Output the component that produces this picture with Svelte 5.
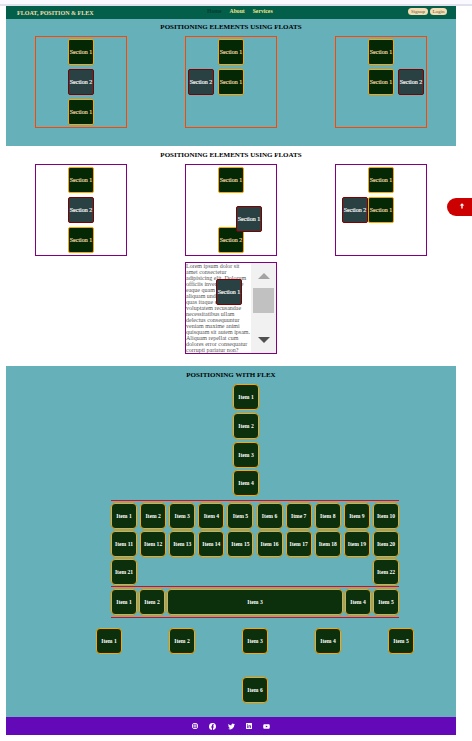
<script>
  const floatBoxes = [
    [{ t: 'Section 1', c: 2, r: 1 }, { t: 'Section 2', c: 2, r: 2, alt: true }, { t: 'Section 1', c: 2, r: 3 }],
    [{ t: 'Section 1', c: 2, r: 1 }, { t: 'Section 2', c: 1, r: 2, alt: true }, { t: 'Section 1', c: 2, r: 2 }],
    [{ t: 'Section 1', c: 2, r: 1 }, { t: 'Section 1', c: 2, r: 2 }, { t: 'Section 2', c: 3, r: 2, alt: true }]
  ];
  const positionBoxes = [
    floatBoxes[0],
    [{ t: 'Section 1', c: 2, r: 1 }, { t: 'Section 2', c: 2, r: 3 }, { t: 'Section 1', c: 2, r: 2, alt: true, kind: 'relative' }],
    [{ t: 'Section 1', c: 2, r: 1 }, { t: 'Section 1', c: 2, r: 2 }, { t: 'Section 2', c: 1, r: 2, alt: true, kind: 'beside' }]
  ];
  const lines = ['Lorem ipsum dolor sit', 'amet consectetur', 'adipisicing elit. Dolorum', 'officiis inventore labore', 'eaque quam quod', 'aliquam unde sunt', 'quas itaque sed', 'voluptatem recusandae', 'necessitatibus ullam', 'delectus consequuntur', 'veniam maxime animi', 'quisquam sit autem ipsam.', 'Aliquam repellat cum', 'dolores error consequatur', 'corrupti pariatur non?'];
  const seq = (a, b) => Array.from({ length: b - a + 1 }, (_, i) => 'Item ' + (a + i));
  const rows = [seq(1, 10).map((s) => (s === 'Item 7' ? 'Itme 7' : s)), seq(11, 20), seq(21, 22)];
</script>

{#snippet boxes(list)}
  <div class="boxes">
    {#each list as box}
      <div class="box">
        {#each box as s}
          <div class="sec {s.kind ?? ''}" class:alt={s.alt} style="grid-column:{s.c};grid-row:{s.r}">{s.t}</div>
        {/each}
      </div>
    {/each}
  </div>
{/snippet}

<div class="page">
  <div class="topline"></div>
  <nav>
    <b class="brand">FLOAT, POSITION &amp; FLEX</b>
    <div class="links"><span class="home">Home</span><span>About</span><span>Services</span></div>
    <div class="auth"><button class="signup">Signup</button><button>Login</button></div>
  </nav>
  <section class="floats">
    <h2>POSITIONING ELEMENTS USING FLOATS</h2>
    {@render boxes(floatBoxes)}
  </section>
  <section class="positions">
    <h2>POSITIONING ELEMENTS USING FLOATS</h2>
    {@render boxes(positionBoxes)}
    <div class="scrollbox">
      <div class="lorem">{#each lines as l}<div>{l}</div>{/each}</div>
      <div class="bar"><i class="up"></i><i class="thumb"></i><i class="down"></i></div>
      <div class="sec alt fixed">Section 1</div>
    </div>
  </section>
  <section class="flex">
    <h2>POSITIONING WITH FLEX</h2>
    <div class="column">{#each seq(1, 4) as t}<div class="item">{t}</div>{/each}</div>
    <div class="wrap">
      {#each rows as row}<div class="row">{#each row as t}<div class="item">{t}</div>{/each}</div>{/each}
    </div>
    <div class="grow">{#each seq(1, 5) as t, i}<div class="item" class:wide={i === 2}>{t}</div>{/each}</div>
    <div class="around">{#each seq(1, 5) as t}<div class="item">{t}</div>{/each}</div>
    <div class="last"><div class="item">Item 6</div></div>
  </section>
  <footer>
    <svg width="6" height="6" viewBox="0 0 24 24"><rect x="2" y="2" width="20" height="20" rx="6" fill="none" stroke="#fff" stroke-width="3.500" /><circle cx="12" cy="12" r="4.600" fill="none" stroke="#fff" stroke-width="3.500" /><circle cx="18" cy="6" r="1.500" fill="#fff" /></svg>
    <svg width="7" height="7" viewBox="0 0 24 24"><path fill="#fff" d="M24 12A12 12 0 1 0 10 23.900V15.500H7V12H10V9.400C10 6.400 11.800 4.700 14.600 4.700L17.200 4.900V7.900H15.700C14.200 7.900 13.800 8.800 13.800 9.700V12H17.100L16.600 15.500H13.800V23.900A12 12 0 0 0 24 12Z" /></svg>
    <svg width="7" height="7" viewBox="0 0 24 24"><path fill="#fff" d="M24 4.600a10 10 0 0 1-2.800.8 5 5 0 0 0 2.100-2.700 10 10 0 0 1-3.100 1.200 4.900 4.900 0 0 0-8.400 4.500A14 14 0 0 1 1.700 3.100a4.900 4.900 0 0 0 1.500 6.600 5 5 0 0 1-2.200-.6 4.900 4.900 0 0 0 3.900 4.900 5 5 0 0 1-2.200.1 4.900 4.900 0 0 0 4.600 3.400A10 10 0 0 1 0 19.500a14 14 0 0 0 21.500-12.400A10 10 0 0 0 24 4.600z" /></svg>
    <svg width="6" height="6" viewBox="0 0 24 24"><path fill="#fff" fill-rule="evenodd" d="M2 0H22Q24 0 24 2V22Q24 24 22 24H2Q0 24 0 22V2Q0 0 2 0ZM4 9V20H7V9ZM4 4V7H7V4ZM10 9V20H13V14Q14 11 17 13V20H20V13Q19 7 13 10V9Z" /></svg>
    <svg width="7" height="5" viewBox="0 0 24 18"><path fill="#fff" fill-rule="evenodd" d="M3 1Q12 0 21 1Q24 1 24 9T21 17Q12 18 3 17Q0 17 0 9T3 1ZM9.500 5V13L16.500 9Z" /></svg>
  </footer>
  <div class="totop"><svg width="6" height="6" viewBox="0 0 6 6"><path d="M3 .2L5.300 2.600H3.700V5.600H2.300V2.600H.7Z" fill="#fff" /></svg></div>
</div>

<style>
  :global(body) { margin: 0; background: #fff; }
  .page { position: relative; width: 472px; height: 741px; overflow: hidden; font-family: 'Liberation Serif', serif; }
  .page, .page * { box-sizing: border-box; }
  .topline { height: 6px; background: #f9f9ff; border-bottom: 2px solid #dfe1ec; }
  nav, section, footer { width: 450px; margin-left: 6px; }
  nav { height: 13px; background: #035f49; display: flex; color: wheat; font-size: 6px; line-height: 13px; }
  .brand { width: 189px; padding-left: 11px; font-size: 6.05px; white-space: nowrap; line-height: 14px; }
  .links { width: 213px; padding-left: 12px; display: flex; gap: 8px; font-size: 5.7px; font-weight: bold; line-height: 11px; color: #f0e68c; }
  .home { color: #033d33; }
  .auth { display: flex; gap: 2px; padding-top: 2px; }
  button { width: 17px; height: 7px; padding: 0; border: 0; border-radius: 4px; background: wheat; color: #66583f; font: 5px/8px 'Liberation Serif', serif; }
  button.signup { width: 20px; }
  h2 { margin: 0; font-size: 7px; line-height: 8px; text-align: center; color: #000; white-space: nowrap; }
  .floats { height: 127px; padding-top: 4px; background: #65b0b9; }
  .positions { height: 220px; padding-top: 5px; }
  .boxes { display: flex; justify-content: space-between; padding: 0 29px; margin-top: 5px; }
  .box { width: 92px; height: 92px; border: 1px solid orangered; display: grid; grid-template-columns: repeat(3, 26px); grid-template-rows: repeat(3, 26px); gap: 4px; padding: 2px; }
  .positions .box { border-color: purple; }
  .sec { width: 26px; height: 26px; border: 1px solid orange; border-radius: 2px; background: #032803; color: wheat; font-size: 6px; line-height: 25px; display: flex; justify-content: center; white-space: nowrap; -webkit-text-stroke: 0.15px; }
  .alt { border-color: #800000; background: #2a4144; color: #fff; }
  .relative { position: relative; left: 18px; top: 9px; }
  .beside { position: relative; left: 4px; }
  .scrollbox { position: relative; width: 92px; height: 92px; margin: 6px auto 0; border: 1px solid purple; display: flex; }
  .lorem { width: 65px; font-size: 6px; line-height: 6px; color: #555; white-space: nowrap; overflow: hidden; }
  .bar { width: 25px; background: #f1f1f1; display: flex; flex-direction: column; align-items: center; padding-top: 10px; }
  .up { border: 6px solid transparent; border-top: 0; border-bottom: 6px solid #a3a3a3; }
  .thumb { width: 21px; height: 25px; margin: 9px 0 24px; background: #c1c1c1; }
  .down { border: 6px solid transparent; border-bottom: 0; border-top: 6px solid #505050; }
  .fixed { position: absolute; left: 30px; top: 16px; }
  .flex { height: 351px; padding-top: 5px; background: #65b0b9; display: flex; flex-direction: column; }
  .item { width: 26px; height: 26px; flex: none; border: 1px solid orange; border-radius: 4px; background: #0b300b; color: #fff; font-weight: bold; font-size: 5.6px; line-height: 25px; text-align: center; white-space: nowrap; }
  .column { margin: 5.3px 0 3.7px 227px; height: 112px; display: flex; flex-direction: column; justify-content: space-between; }
  .wrap { width: 288px; height: 87px; margin-left: 105px; border: solid red; border-width: 1px 0; padding-top: 2px; display: flex; flex-direction: column; gap: 2px; }
  .row { display: flex; justify-content: space-between; }
  .grow { width: 288px; height: 31px; margin-left: 105px; padding-top: 2px; border-bottom: 1px solid red; display: flex; gap: 2px; }
  .wide { width: auto; flex: 1; }
  .around { width: 318px; margin: 10px 0 0 90px; display: flex; justify-content: space-between; }
  .last { margin: 23px 0 0 236px; }
  footer { height: 18px; background: #6409b7; display: flex; justify-content: center; align-items: center; gap: 11.3px; }
  .totop { position: absolute; left: 447px; top: 198px; width: 36px; height: 18px; border-radius: 9px; background: #c00; padding: 5px 12px; line-height: 0; }
</style>
